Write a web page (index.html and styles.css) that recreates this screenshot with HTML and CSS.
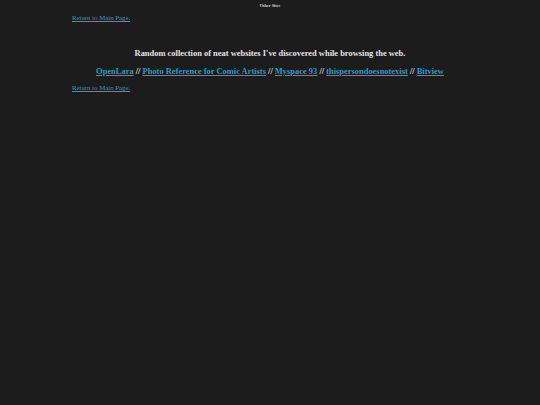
FILE: index.html
```html
<!DOCTYPE html>
<html>
<head>
<meta charset="utf-8">
<link rel="stylesheet" href="styles.css">
</head>
<body>
<div class="title">Other Sites</div>
<main class="content">
  <a class="back" href="#">Return to Main Page.</a>
  <h2 class="intro">Random collection of neat websites I've discovered while browsing the web.</h2>
  <p class="links"><a href="#">OpenLara</a> // <a href="#">Photo Reference for Comic Artists</a> // <a href="#">Myspace 93</a> // <a href="#">thispersondoesnotexist</a> // <a href="#">Bitview</a></p>
  <a class="back" href="#">Return to Main Page.</a>
</main>
</body>
</html>
```
FILE: styles.css
```css
html, body {
  margin: 0;
  padding: 0;
  background: #1c1c1c;
  color: #e8e0e8;
  font-family: "Liberation Serif", "Times New Roman", serif;
  height: 100%;
}
.title {
  text-align: center;
  font-size: 4.3px;
  font-weight: bold;
  padding-top: 3px;
  color: #d8d8d8;
}
.content {
  width: 396px;
  margin: 0 auto;
  display: flex;
  flex-direction: column;
  padding-top: 6px;
}
a {
  color: #2a9ad0;
}
.back {
  font-size: 6.8px;
  align-self: flex-start;
}
.intro {
  text-align: center;
  font-size: 8.45px;
  margin: 27px 0 0;
}
.links {
  text-align: center;
  font-size: 8.45px;
  font-weight: bold;
  margin: 8px 0 8px;
}
```
